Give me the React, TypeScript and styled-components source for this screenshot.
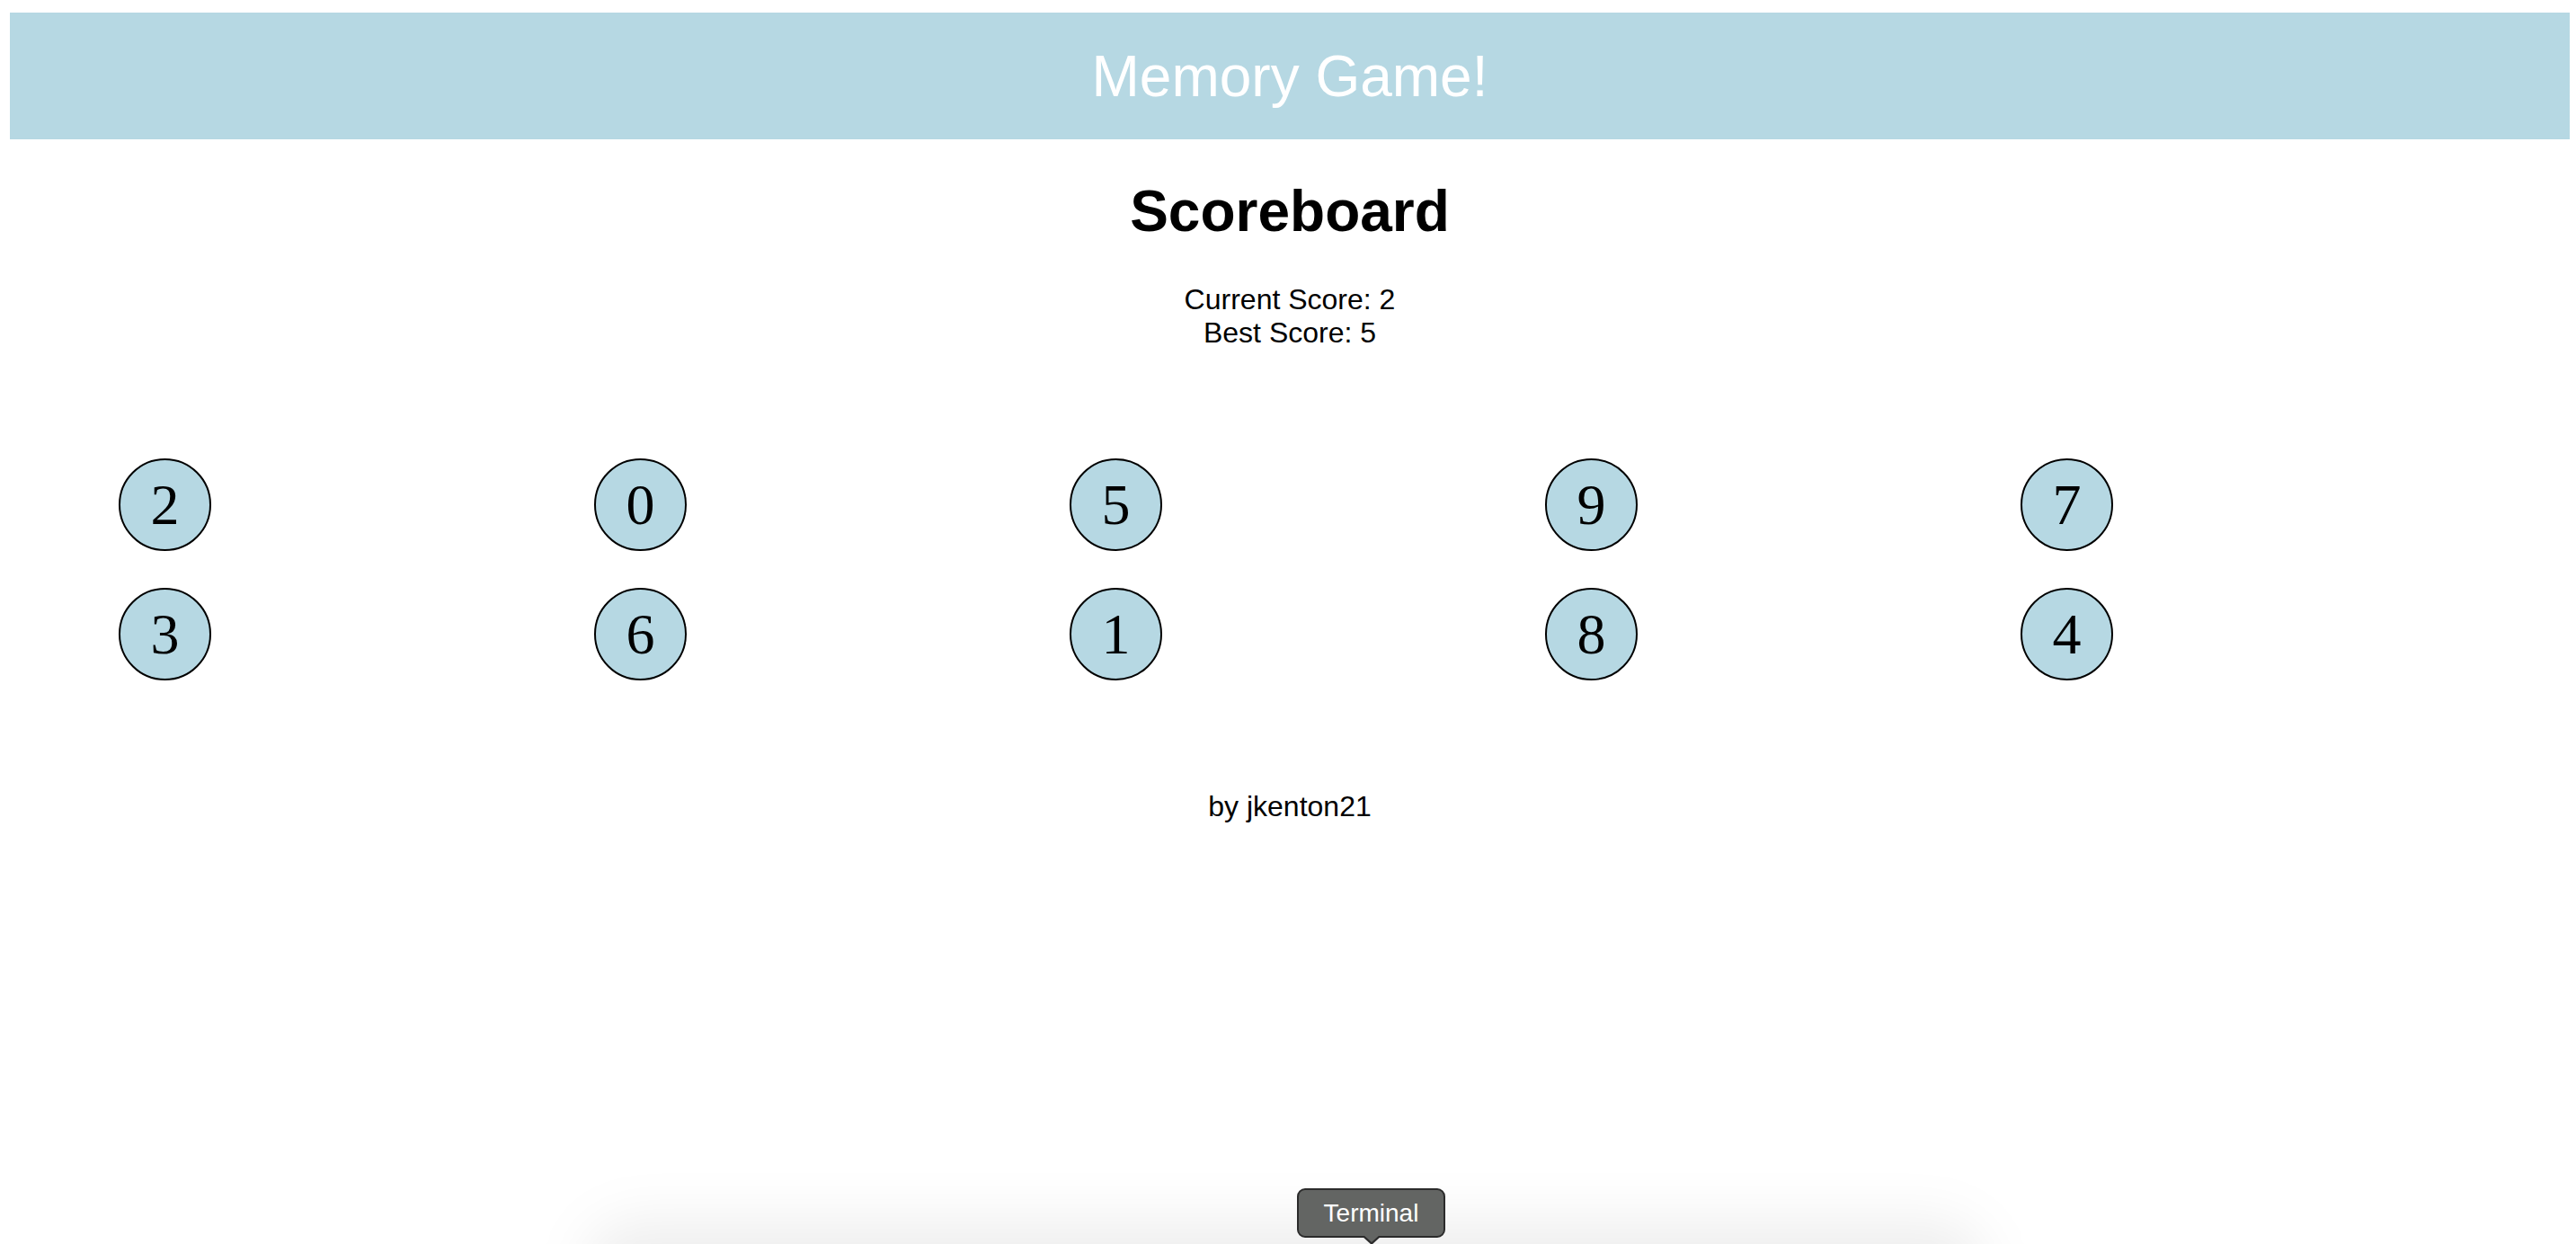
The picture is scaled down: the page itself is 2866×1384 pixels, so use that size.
import styled, { createGlobalStyle } from "styled-components";

const cards = [2, 0, 5, 9, 7, 3, 6, 1, 8, 4];

const GlobalStyle = createGlobalStyle`
  html, body {
    overflow: hidden;
  }
  body {
    margin: 14px 7px 0 11px;
    background: #ffffff;
    font-family: "Liberation Sans", Arial, Helvetica, sans-serif;
    color: #000;
  }
`;

const Header = styled.header`
  display: flex;
  align-items: center;
  justify-content: center;
  height: 141px;
  background: #b6d8e3;
  color: #ffffff;
  font-size: 64px;
`;

const Scoreboard = styled.section`
  text-align: center;
`;

const Title = styled.h1`
  margin: 43px 0;
  font-size: 64px;
  font-weight: bold;
`;

const Scores = styled.div`
  font-size: 32px;
`;

const Board = styled.div`
  display: grid;
  grid-template-columns: repeat(5, 529px);
  row-gap: 41px;
  margin: 121px 0 122px;
  padding-left: 121px;
`;

const Card = styled.div`
  display: flex;
  align-items: center;
  justify-content: center;
  box-sizing: border-box;
  width: 103px;
  height: 103px;
  border: 2px solid #000;
  border-radius: 50%;
  background: #b6d8e3;
  font-family: "Liberation Serif", "Times New Roman", serif;
  font-size: 64px;
  line-height: 1;
  cursor: pointer;
`;

const Footer = styled.footer`
  text-align: center;
  font-size: 32px;
`;

// macOS dock bits that sit over the page in the screenshot
const DockShade = styled.div`
  position: fixed;
  left: 650px;
  width: 1560px;
  top: 1358px;
  height: 120px;
  border-radius: 60px;
  background: rgba(0, 0, 0, 0.065);
  filter: blur(30px);
  pointer-events: none;
`;

const Tooltip = styled.div`
  position: fixed;
  left: 1443px;
  top: 1322px;
  width: 165px;
  height: 55px;
  box-sizing: border-box;
  display: flex;
  align-items: center;
  justify-content: center;
  background: #636563;
  border: 2px solid #2b2b2b;
  border-radius: 9px;
  color: #ffffff;
  font-size: 28px;

  &::after {
    content: "";
    position: absolute;
    left: 50%;
    bottom: -10px;
    transform: translateX(-50%);
    border-left: 11px solid transparent;
    border-right: 11px solid transparent;
    border-top: 10px solid #2b2b2b;
  }

  &::before {
    content: "";
    position: absolute;
    left: 50%;
    bottom: -7px;
    transform: translateX(-50%);
    border-left: 9px solid transparent;
    border-right: 9px solid transparent;
    border-top: 8px solid #636563;
    z-index: 1;
  }
`;

export default function App() {
  return (
    <>
      <GlobalStyle />
      <Header>Memory Game!</Header>
      <Scoreboard>
        <Title>Scoreboard</Title>
        <Scores>
          <div>Current Score: 2</div>
          <div>Best Score: 5</div>
        </Scores>
      </Scoreboard>
      <Board>
        {cards.map((n) => (
          <div key={n}>
            <Card>{n}</Card>
          </div>
        ))}
      </Board>
      <Footer>by jkenton21</Footer>
      <DockShade />
      <Tooltip>Terminal</Tooltip>
    </>
  );
}
